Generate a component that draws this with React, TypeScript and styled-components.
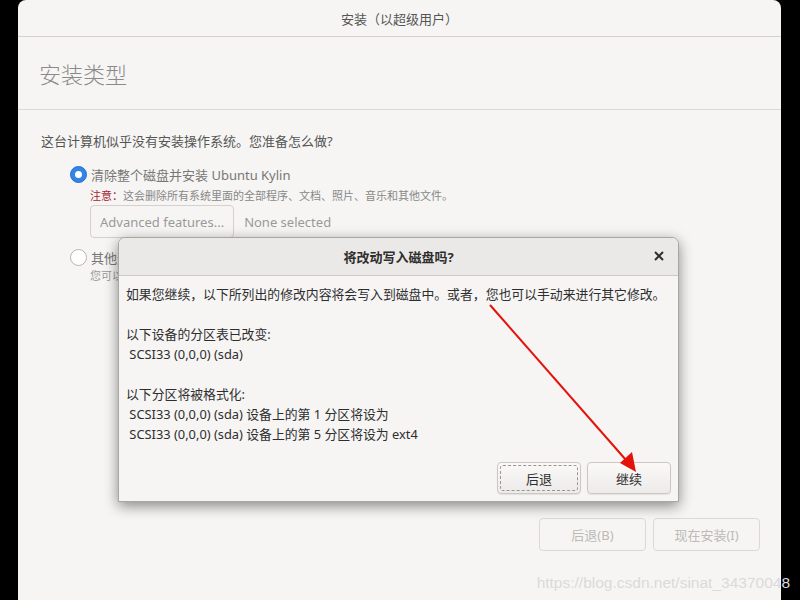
import React from 'react';
import styled, { createGlobalStyle } from 'styled-components';

const GlobalStyle = createGlobalStyle`
  html, body {
    margin: 0;
    padding: 0;
    background: #000;
  }
  body {
    font-family: "Noto Sans", "Noto Sans CJK SC", sans-serif;
    overflow: hidden;
  }
`;

const Screen = styled.div`
  position: relative;
  width: 800px;
  height: 600px;
  overflow: hidden;
`;

const Window = styled.div`
  position: relative;
  margin-left: 18px;
  width: 763px;
  height: 600px;
  background: #f6f5f4;
  border-radius: 8px 8px 0 0;
  display: flex;
  flex-direction: column;
`;

const TitleBar = styled.div`
  height: 36px;
  border-bottom: 1px solid #d6d1cd;
  display: flex;
  align-items: center;
  justify-content: center;
  font-size: 13px;
  color: #555;
`;

const Header = styled.div`
  height: 72px;
  border-bottom: 1px solid #dcd8d4;
  display: flex;
  align-items: center;
  padding-left: 21px;
  font-size: 22px;
  color: #8a8a8a;
  font-family: "Noto Sans CJK SC", sans-serif;
  font-weight: 300;
`;

const Content = styled.div`
  flex: 1;
  padding: 22px 23px 0;
`;

const Question = styled.div`
  font-size: 13px;
  line-height: 18px;
  color: #555;
`;

const Options = styled.div`
  margin-top: 15px;
  padding-left: 29px;
  display: flex;
  flex-direction: column;
`;

const OptionRow = styled.div`
  display: flex;
  align-items: center;
  gap: 4px;
  height: 18px;
`;

const Radio = styled.span<{ $checked?: boolean }>`
  box-sizing: border-box;
  width: 17px;
  height: 17px;
  border-radius: 50%;
  flex-shrink: 0;
  display: flex;
  align-items: center;
  justify-content: center;
  background: ${(p) => (p.$checked ? '#3584e4' : '#fff')};
  border: 1px solid ${(p) => (p.$checked ? '#1c71d8' : '#b8b3ae')};
  &::after {
    content: '';
    display: ${(p) => (p.$checked ? 'block' : 'none')};
    width: 7px;
    height: 7px;
    border-radius: 50%;
    background: #fff;
  }
`;

const OptionLabel = styled.span`
  font-size: 13px;
  color: #777;
`;

const Indented = styled.div`
  padding-left: 20px;
`;

const Note = styled.div`
  margin-top: 5px;
  font-size: 11px;
  line-height: 15px;
  color: #888;
`;

const Warn = styled.span`
  color: #a51d2d;
`;

const FeatureRow = styled.div`
  margin-top: 2px;
  display: flex;
  align-items: center;
  gap: 10px;
`;

const FlatButton = styled.button`
  box-sizing: border-box;
  height: 33px;
  padding: 0 9px;
  border: 1px solid #d5d0cc;
  border-radius: 4px;
  background: #f6f5f4;
  color: #999;
  font-family: inherit;
  font-size: 13px;
`;

const Muted = styled.span`
  font-size: 13px;
  color: #999;
`;

const SecondOption = styled.div`
  margin-top: 10px;
`;

const SubNote = styled.div`
  margin-top: 2px;
  font-size: 11px;
  line-height: 15px;
  color: #999;
`;

const Footer = styled.div`
  display: flex;
  justify-content: flex-end;
  gap: 7px;
  padding: 0 21px 49px;
`;

const FooterButton = styled(FlatButton)`
  width: 107px;
  color: #bdbab7;
  border-color: #dcd8d4;
`;

const Dialog = styled.div`
  position: absolute;
  left: 100px;
  top: 237px;
  width: 561px;
  height: 265px;
  box-sizing: border-box;
  background: #f6f5f4;
  border: 1px solid #a9a5a1;
  border-radius: 7px 7px 0 0;
  box-shadow: 0 4px 14px rgba(0, 0, 0, 0.45);
  display: flex;
  flex-direction: column;
`;

const DialogHead = styled.div`
  position: relative;
  height: 37px;
  flex-shrink: 0;
  background: #ebe9e7;
  border-bottom: 1px solid #cfcac5;
  border-radius: 6px 6px 0 0;
  display: flex;
  align-items: center;
  justify-content: center;
  font-size: 13px;
  font-weight: bold;
  color: #2e2e2e;
`;

const CloseX = styled.span`
  position: absolute;
  right: 12px;
  top: 11px;
  width: 14px;
  height: 14px;
  display: flex;
  align-items: center;
  justify-content: center;
`;

const DialogBody = styled.div`
  flex: 1;
  padding: 8px 7px 0;
  font-size: 12.85px;
  line-height: 20px;
  color: #2e2e2e;
  white-space: pre;
`;

const DialogActions = styled.div`
  display: flex;
  justify-content: flex-end;
  gap: 6px;
  padding: 0 7px 7px;
`;

const DialogButton = styled.button<{ $focused?: boolean }>`
  position: relative;
  box-sizing: border-box;
  width: 84px;
  height: 32px;
  border: 1px solid #cdc7c2;
  border-radius: 4px;
  background: linear-gradient(#faf9f8, #edebe9);
  box-shadow: 0 1px 1px rgba(0, 0, 0, 0.08);
  color: #2e2e2e;
  font-family: inherit;
  font-size: 13px;
  &::after {
    content: '';
    display: ${(p) => (p.$focused ? 'block' : 'none')};
    position: absolute;
    inset: 2px;
    border: 1px dashed #9a9590;
    border-radius: 3px;
  }
`;

const Overlay = styled.svg`
  position: absolute;
  left: 0;
  top: 0;
  pointer-events: none;
`;

const Watermark = styled.div`
  position: absolute;
  right: 10px;
  bottom: 8px;
  font-family: "Liberation Sans", Arial, sans-serif;
  font-size: 15.5px;
  color: #dadada;
`;

const bodyText = `如果您继续，以下所列出的修改内容将会写入到磁盘中。或者，您也可以手动来进行其它修改。

以下设备的分区表已改变:
 SCSI33 (0,0,0) (sda)

以下分区将被格式化:
 SCSI33 (0,0,0) (sda) 设备上的第 1 分区将设为
 SCSI33 (0,0,0) (sda) 设备上的第 5 分区将设为 ext4`;

const App: React.FC = () => {
  return (
    <Screen>
      <GlobalStyle />
      <Window>
        <TitleBar>安装（以超级用户）</TitleBar>
        <Header>安装类型</Header>
        <Content>
          <Question>这台计算机似乎没有安装操作系统。您准备怎么做?</Question>
          <Options>
            <OptionRow>
              <Radio $checked />
              <OptionLabel>清除整个磁盘并安装 Ubuntu Kylin</OptionLabel>
            </OptionRow>
            <Indented>
              <Note>
                <Warn>注意：</Warn>这会删除所有系统里面的全部程序、文档、照片、音乐和其他文件。
              </Note>
              <FeatureRow>
                <FlatButton>Advanced features...</FlatButton>
                <Muted>None selected</Muted>
              </FeatureRow>
            </Indented>
            <SecondOption>
              <OptionRow>
                <Radio />
                <OptionLabel>其他选项</OptionLabel>
              </OptionRow>
              <Indented>
                <SubNote>您可以自己创建、调整分区，或者为 Ubuntu Kylin 选择多个分区。</SubNote>
              </Indented>
            </SecondOption>
          </Options>
        </Content>
        <Footer>
          <FooterButton>后退(B)</FooterButton>
          <FooterButton>现在安装(I)</FooterButton>
        </Footer>

        <Dialog>
          <DialogHead>
            将改动写入磁盘吗?
            <CloseX>
              <svg width="10" height="10" viewBox="0 0 10 10">
                <path d="M1 1 L9 9 M9 1 L1 9" stroke="#2e2e2e" strokeWidth="2" />
              </svg>
            </CloseX>
          </DialogHead>
          <DialogBody>{bodyText}</DialogBody>
          <DialogActions>
            <DialogButton $focused>后退</DialogButton>
            <DialogButton>继续</DialogButton>
          </DialogActions>
        </Dialog>
      </Window>

      <Overlay width="800" height="600" viewBox="0 0 800 600">
        <line x1="490" y1="305" x2="626" y2="460" stroke="#e3120b" strokeWidth="2" />
        <polygon points="636,472 620,463 632,452" fill="#e3120b" />
      </Overlay>
      <Watermark>https://blog.csdn.net/sinat_34370048</Watermark>
    </Screen>
  );
};

export default App;
